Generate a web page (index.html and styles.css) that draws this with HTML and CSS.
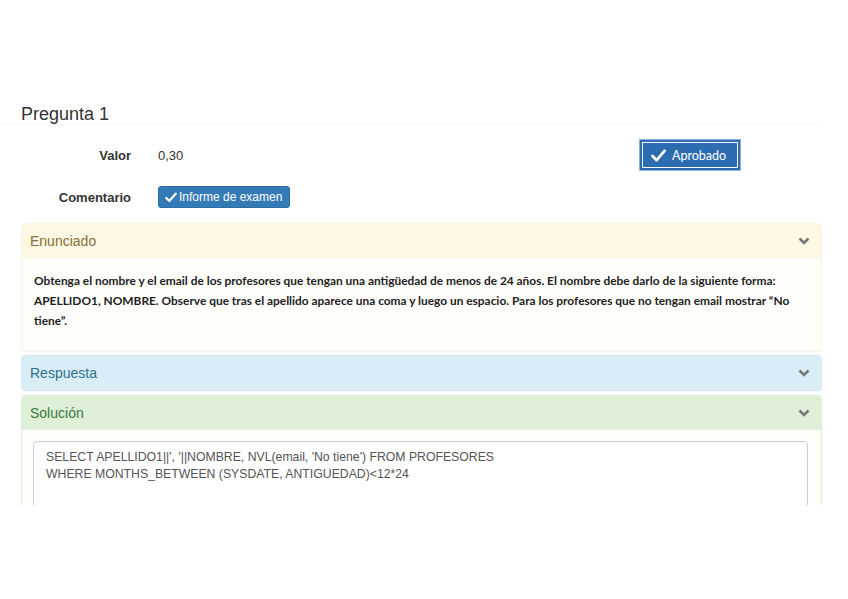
FILE: index.html
```html
<!DOCTYPE html>
<html lang="es">
<head>
<meta charset="utf-8">
<link rel="stylesheet" href="styles.css">
</head>
<body>
<div class="page">
  <div class="title-bar"><h1 class="title">Pregunta 1</h1></div>
  <div class="row row-valor">
    <div class="label">Valor</div>
    <div class="value">0,30</div>
    <div class="approved">
      <svg class="tick" viewBox="0 0 16 14" width="15" height="13"><path d="M1.5 7.5 L6 12 L14.5 2" fill="none" stroke="#fff" stroke-width="3" stroke-linecap="round" stroke-linejoin="round"/></svg>
      <span>Aprobado</span>
    </div>
  </div>
  <div class="row row-com">
    <div class="label">Comentario</div>
    <div class="btn-info"><svg class="tick-s" viewBox="0 0 14 12" width="12" height="11"><path d="M1.5 6.5 L5 10 L12.5 1.5" fill="none" stroke="#fff" stroke-width="2.6" stroke-linecap="round" stroke-linejoin="round"/></svg>Informe de examen</div>
  </div>

  <div class="panel panel-warning">
    <div class="panel-heading"><span>Enunciado</span><svg class="chev" viewBox="0 0 12 8" width="12" height="8"><path d="M1.5 1.5 L6 6 L10.5 1.5" fill="none" stroke="#777" stroke-width="2.6"/></svg></div>
    <div class="panel-body statement">
      <p>Obtenga el nombre y el email de los profesores que tengan una antigüedad de menos de 24 años. El nombre debe darlo de la siguiente forma:<br>APELLIDO1, NOMBRE. Observe que tras el apellido aparece una coma y luego un espacio. Para los profesores que no tengan email mostrar “No<br>tiene”.</p>
    </div>
  </div>

  <div class="panel panel-info">
    <div class="panel-heading"><span>Respuesta</span><svg class="chev" viewBox="0 0 12 8" width="12" height="8"><path d="M1.5 1.5 L6 6 L10.5 1.5" fill="none" stroke="#777" stroke-width="2.6"/></svg></div>
  </div>

  <div class="panel panel-success">
    <div class="panel-heading"><span>Solución</span><svg class="chev" viewBox="0 0 12 8" width="12" height="8"><path d="M1.5 1.5 L6 6 L10.5 1.5" fill="none" stroke="#777" stroke-width="2.6"/></svg></div>
    <div class="panel-body code-body">
      <div class="code">SELECT APELLIDO1||', '||NOMBRE, NVL(email, 'No tiene') FROM PROFESORES<br>WHERE MONTHS_BETWEEN (SYSDATE, ANTIGUEDAD)&lt;12*24</div>
    </div>
  </div>
</div>
</body>
</html>
```

FILE: styles.css
```css
html, body {
  margin: 0;
  padding: 0;
  background: #fff;
}
body {
  font-family: "Liberation Sans", Arial, sans-serif;
  color: #333;
}
.page {
  height: 505px;
  overflow: hidden;
  padding-top: 103px;
  box-sizing: border-box;
}
.title-bar {
  width: 818px;
  border-bottom: 1px solid #f4f4f4;
  padding-left: 21px;
  box-sizing: border-box;
  height: 22px;
}
.title {
  margin: 0;
  font-weight: normal;
  font-size: 18px;
  line-height: 22px;
  color: #333;
}
.row {
  display: flex;
  align-items: center;
  width: 820px;
}
.row-valor {
  height: 32px;
  margin-top: 14px;
}
.row-com {
  height: 22px;
  margin-top: 15px;
}
.label {
  width: 131px;
  text-align: right;
  font-weight: bold;
  font-size: 13px;
  color: #333;
}
.value {
  margin-left: 27px;
  font-size: 13px;
  color: #333;
  flex: 1;
}
.approved {
  width: 100px;
  height: 30px;
  box-sizing: border-box;
  margin-right: 80px;
  background: #2c6cb0;
  border: 2px solid #2c6cb0;
  box-shadow: inset 0 0 0 1px #fff, 0 0 0 1px #8fb3dc;
  display: flex;
  align-items: center;
  padding-left: 9px;
  gap: 6px;
  color: #fff;
  font-family: Lato, "Noto Sans", sans-serif;
  font-size: 12.5px;
}
.btn-info {
  margin-left: 27px;
  height: 22px;
  width: 132px;
  box-sizing: border-box;
  background: #337ab7;
  border: 1px solid #2e6da4;
  border-radius: 3px;
  color: #fff;
  font-size: 12px;
  display: flex;
  align-items: center;
  padding-left: 6px;
  gap: 2px;
}
.panel {
  margin-left: 21px;
  width: 799px;
  border-radius: 4px;
  box-shadow: 0 1px 1px rgba(0,0,0,0.04);
  background: #fffefb;
}
.panel + .panel {
  margin-top: 4px;
}
.panel-warning {
  margin-top: 15px;
  border: 1px solid #fbf4e4;
}
.panel-heading {
  height: 34px;
  display: flex;
  align-items: center;
  justify-content: space-between;
  padding: 0 11px 0 8px;
  font-size: 14px;
  border-top-left-radius: 3px;
  border-top-right-radius: 3px;
}
.panel-warning .panel-heading {
  background: #fcf8e3;
  color: #8a6d3b;
}
.panel-info {
  border: 1px solid #d4e9f4;
}
.panel-info .panel-heading {
  background: #d9edf7;
  color: #31708f;
  border-radius: 3px;
}
.panel-success {
  border: 1px solid #dcefd4;
}
.panel-success .panel-heading {
  background: #dff0d8;
  color: #3c763d;
}
.statement {
  padding: 13px 10px 19px 12px;
}
.statement p {
  margin: 0;
  font-family: Lato, "Noto Sans", sans-serif;
  font-weight: bold;
  font-size: 11.9px;
  line-height: 20px;
  color: #222;
  white-space: nowrap;
}
.code-body {
  padding: 11px 13px 0 11px;
}
.code {
  border: 1px solid #ccc;
  border-radius: 4px;
  height: 120px;
  padding: 7px 12px;
  font-size: 12.25px;
  line-height: 17px;
  color: #555;
  background: #fff;
}
```
